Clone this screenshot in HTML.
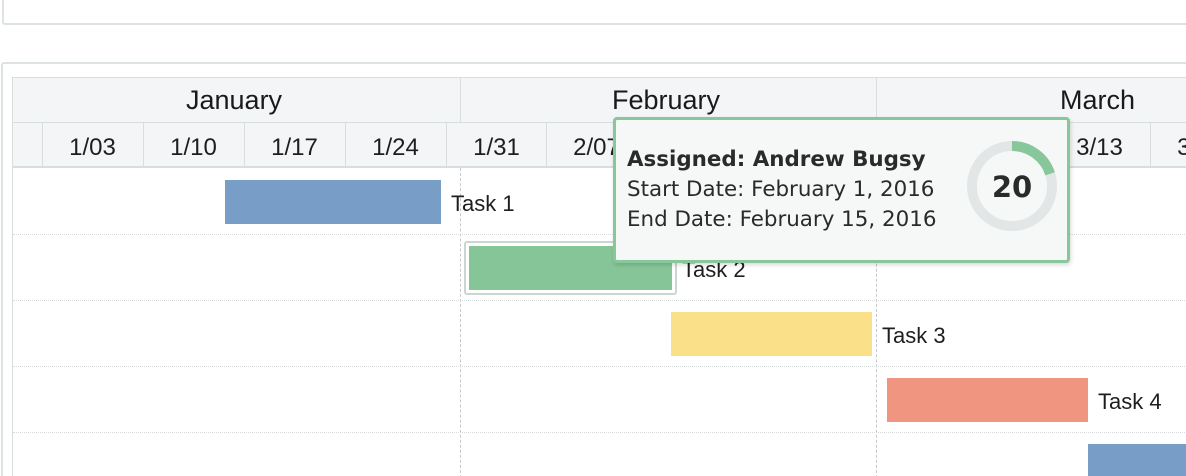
<!DOCTYPE html>
<html><head><style>
*{margin:0;padding:0;box-sizing:border-box}
html,body{width:1186px;height:476px;overflow:hidden}
body{background:#fff;font-family:"Liberation Sans",sans-serif;color:#222;position:relative}
.a{position:absolute}
.hdr{background:#f3f5f6}
.t{font-size:22px;color:#1e1e1e}
</style></head><body>
<div class="a" style="left:2px;top:-5px;width:1200px;height:30px;border:2px solid #dde2e2;border-radius:3px"></div>
<div class="a" style="left:1px;top:62px;width:1200px;height:430px;border:2px solid #dde2e2;border-radius:3px"></div>
<div class="a hdr" style="left:12px;top:77px;width:1180px;height:91px;border:1px solid #d8dddd;border-bottom:2px solid #d8dddd"></div>
<div class="a" style="left:12px;top:122px;width:1180px;height:1px;background:#d8dddd"></div>
<div class="a" style="left:12px;top:77px;width:1px;height:400px;background:#d8dddd"></div>
<div class="a" style="left:460px;top:77px;width:1px;height:45px;background:#d8dddd"></div>
<div class="a" style="left:876px;top:77px;width:1px;height:45px;background:#d8dddd"></div>
<div class="a" style="left:186px;top:85px;font-size:27px;color:#1a1a1a">January</div>
<div class="a" style="left:612px;top:85px;font-size:27px;color:#1a1a1a">February</div>
<div class="a" style="left:1060px;top:85px;font-size:27px;color:#1a1a1a">March</div>
<div id="wk"></div>
<div class="a" style="left:460px;top:168px;height:310px;border-left:1px dashed #c4c8c8"></div>
<div class="a" style="left:876px;top:168px;height:310px;border-left:1px dashed #c4c8c8"></div>
<div class="a" style="left:13px;top:234px;width:1180px;border-top:1px dotted #d6dada"></div>
<div class="a" style="left:13px;top:300px;width:1180px;border-top:1px dotted #d6dada"></div>
<div class="a" style="left:13px;top:366px;width:1180px;border-top:1px dotted #d6dada"></div>
<div class="a" style="left:13px;top:432px;width:1180px;border-top:1px dotted #d6dada"></div>
<div class="a" style="left:225px;top:180px;width:216px;height:44px;background:#789ec8"></div>
<div class="a t" style="left:451px;top:191px">Task 1</div>
<div class="a" style="left:464px;top:241px;width:213px;height:54px;border:2px solid #ccd6d0;border-radius:3px"></div>
<div class="a" style="left:469px;top:246px;width:203px;height:44px;background:#85c598"></div>
<div class="a t" style="left:682px;top:257px">Task 2</div>
<div class="a" style="left:671px;top:312px;width:201px;height:44px;background:#fbe08a"></div>
<div class="a t" style="left:882px;top:323px">Task 3</div>
<div class="a" style="left:887px;top:378px;width:201px;height:44px;background:#f0957f"></div>
<div class="a t" style="left:1098px;top:389px">Task 4</div>
<div class="a" style="left:1088px;top:444px;width:100px;height:40px;background:#789ec8"></div>
<div class="a" style="left:613px;top:117px;width:457px;height:146px;background:#f6f8f8;border:3px solid #88c79a;border-radius:4px;box-shadow:1px 2px 4px rgba(0,0,0,.15)">
<div class="a" style="left:11px;top:25px;font-family:'DejaVu Sans',sans-serif;font-size:21.4px;line-height:30px;color:#2a2a2a;white-space:nowrap"><b>Assigned: Andrew Bugsy</b><br>Start Date: February 1, 2016<br>End Date: February 15, 2016</div>
<svg class="a" style="left:348px;top:18px" width="96" height="96" viewBox="0 0 96 96">
<circle cx="48" cy="48" r="40" fill="none" stroke="#e3e6e6" stroke-width="10"/>
<circle cx="48" cy="48" r="40" fill="none" stroke="#88c79a" stroke-width="10" stroke-dasharray="50.3 300" transform="rotate(-90 48 48)"/>
<text x="48" y="59" text-anchor="middle" font-family="DejaVu Sans,sans-serif" font-weight="bold" font-size="29" fill="#2a2a2a">20</text>
</svg>
</div>
<script>
var w=document.getElementById('wk'),b=[42,143,244,345,446,546,647,748,849,950,1049,1150,1251],l=['1/03','1/10','1/17','1/24','1/31','2/07','2/14','2/21','2/28','3/06','3/13','3/20'],h='';
for(var i=0;i<b.length;i++){h+='<div class="a" style="left:'+b[i]+'px;top:123px;width:1px;height:45px;background:#d8dddd"></div>';
if(i<l.length)h+='<div class="a t" style="left:'+b[i]+'px;top:134px;width:101px;text-align:center;font-size:24px">'+l[i]+'</div>';}
w.innerHTML=h;
</script>
</body></html>
